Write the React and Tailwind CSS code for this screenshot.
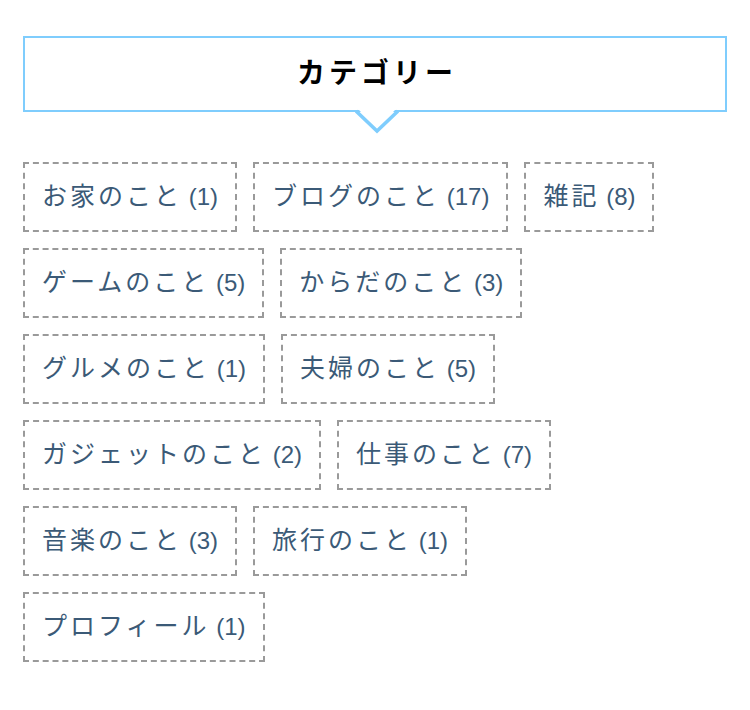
import React from "react";

const tags = [
  ["お家のこと", 1],
  ["ブログのこと", 17],
  ["雑記", 8],
  ["ゲームのこと", 5],
  ["からだのこと", 3],
  ["グルメのこと", 1],
  ["夫婦のこと", 5],
  ["ガジェットのこと", 2],
  ["仕事のこと", 7],
  ["音楽のこと", 3],
  ["旅行のこと", 1],
  ["プロフィール", 1],
];

export default function App() {
  return (
    <div
      className="w-[750px] h-[710px] bg-white pt-[36px] px-[23px]"
      style={{ fontFamily: '"Liberation Sans", "Noto Sans CJK JP", sans-serif' }}
    >
      <div className="relative w-[704px] h-[76px] border-2 border-[#7fcdfd] flex items-center justify-center">
        <span className="text-[28px] font-bold text-black tracking-[4px] pl-[4px]">カテゴリー</span>
        <svg
          className="absolute left-[330px] top-[70px]"
          width="44"
          height="26"
          viewBox="0 0 44 26"
        >
          <polygon points="2,0 42,0 22,20" fill="#ffffff" />
          <polyline points="1,3 22,23 43,3" fill="none" stroke="#7fcdfd" strokeWidth="3.5" />
        </svg>
      </div>
      <div className="mt-[50px] flex flex-wrap gap-[16px] w-[690px]">
        {tags.map(([name, n]) => (
          <div
            key={name}
            className="h-[70px] px-[17px] flex items-center border-2 border-dashed border-[#9a9a9a] text-[#3b5a77] whitespace-nowrap"
          >
            <span className="text-[25px] tracking-[3px]">{name}</span>
            <span className="text-[24px]">{"\u00a0"}({n})</span>
          </div>
        ))}
      </div>
    </div>
  );
}
